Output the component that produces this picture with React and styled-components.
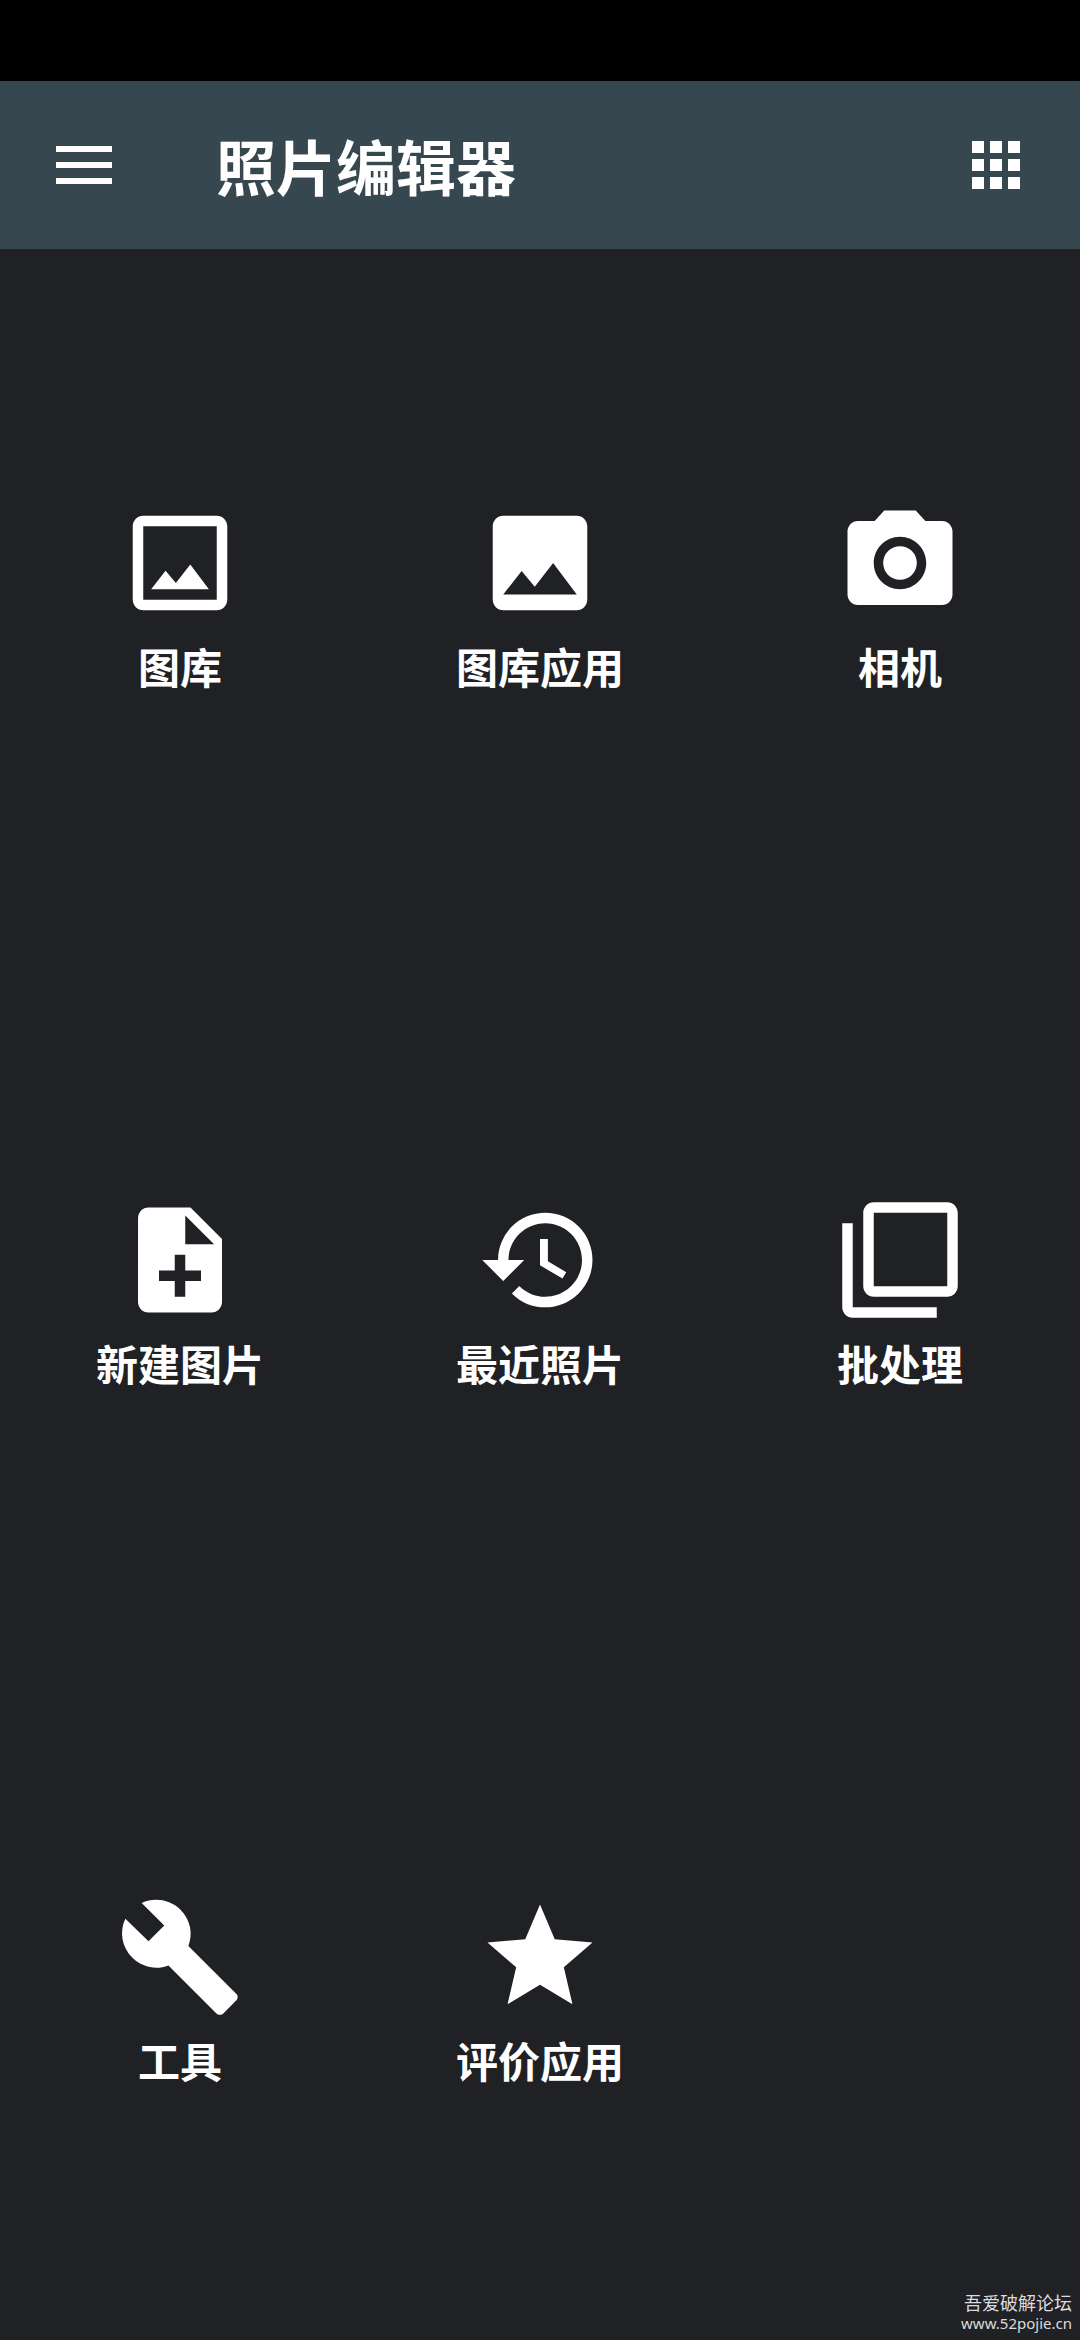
// IMPORTS //

import React from 'react';
import styled, { createGlobalStyle } from 'styled-components';
import {
  MdApps,
  MdBuild,
  MdCameraAlt,
  MdCropOriginal,
  MdFilterNone,
  MdHistory,
  MdNoteAdd,
  MdPhoto,
  MdStar,
} from 'react-icons/md';

// DATA //

const actions = [
  { label: '图库', icon: MdCropOriginal },
  { label: '图库应用', icon: MdPhoto },
  { label: '相机', icon: MdCameraAlt },
  { label: '新建图片', icon: MdNoteAdd },
  { label: '最近照片', icon: MdHistory },
  { label: '批处理', icon: MdFilterNone },
  { label: '工具', icon: MdBuild },
  { label: '评价应用', icon: MdStar },
];

// COMPONENT //

const App = () => {
  return (
    <>
      <GlobalStyle />
      <Screen>
        <StatusBar />
        <Toolbar>
          <ToolbarButton type="button" aria-label="菜单">
            <MenuIcon viewBox="0 0 56 38" aria-hidden="true">
              <path d="M0 0h56v6H0zM0 16h56v6H0zM0 32h56v6H0z" />
            </MenuIcon>
          </ToolbarButton>
          <Title>照片编辑器</Title>
          <ToolbarButton type="button" aria-label="应用">
            <MdApps size={72} />
          </ToolbarButton>
        </Toolbar>
        <ActionGrid>
          {actions.map(({ label, icon: Icon }) => (
            <ActionButton type="button" key={label}>
              <Icon size={126} />
              <ActionLabel>{label}</ActionLabel>
            </ActionButton>
          ))}
        </ActionGrid>
        <Watermark>
          <WatermarkName>吾爱破解论坛</WatermarkName>
          <WatermarkUrl>www.52pojie.cn</WatermarkUrl>
        </Watermark>
      </Screen>
    </>
  )
}

export default App;

// STYLING //

const GlobalStyle = createGlobalStyle`
  * {
    box-sizing: border-box;
  }

  body {
    margin: 0;
    background-color: #202125;
    font-family: "Noto Sans CJK SC", sans-serif;
  }

  button {
    padding: 0;
    border: 0;
    background: none;
    color: inherit;
    font: inherit;
    cursor: pointer;
  }
`

const Screen = styled.div`
  position: relative;
  display: flex;
  flex-direction: column;
  min-height: 100vh;
  color: #ffffff;
`

const StatusBar = styled.div`
  height: 81px;
  background-color: #000000;
`

const Toolbar = styled.header`
  display: flex;
  align-items: center;
  height: 168px;
  padding: 0 48px 0 56px;
  background-color: #37474f;
`

const ToolbarButton = styled.button`
  display: flex;
`

const MenuIcon = styled.svg`
  width: 56px;
  height: 38px;
  fill: currentColor;
`

const Title = styled.h1`
  flex: 1;
  margin: 0 0 0 104px;
  font-size: 60px;
  font-weight: 700;
  line-height: 84px;
`

const ActionGrid = styled.main`
  flex: 1;
  display: grid;
  grid-template-columns: repeat(3, 1fr);
  grid-auto-rows: 1fr;
`

const ActionButton = styled.button`
  display: flex;
  flex-direction: column;
  align-items: center;
  justify-content: center;
  gap: 13px;
  padding-bottom: 2px;
`

const ActionLabel = styled.span`
  font-size: 42px;
  font-weight: 700;
  line-height: 54px;
`

const Watermark = styled.div`
  position: absolute;
  right: 8px;
  bottom: 8px;
  display: flex;
  flex-direction: column;
  align-items: flex-end;
  color: #dcdcdc;
`

const WatermarkName = styled.span`
  font-size: 18px;
  line-height: 24px;
`

const WatermarkUrl = styled.span`
  font-family: "Noto Sans", sans-serif;
  font-size: 15px;
  line-height: 18px;
`
